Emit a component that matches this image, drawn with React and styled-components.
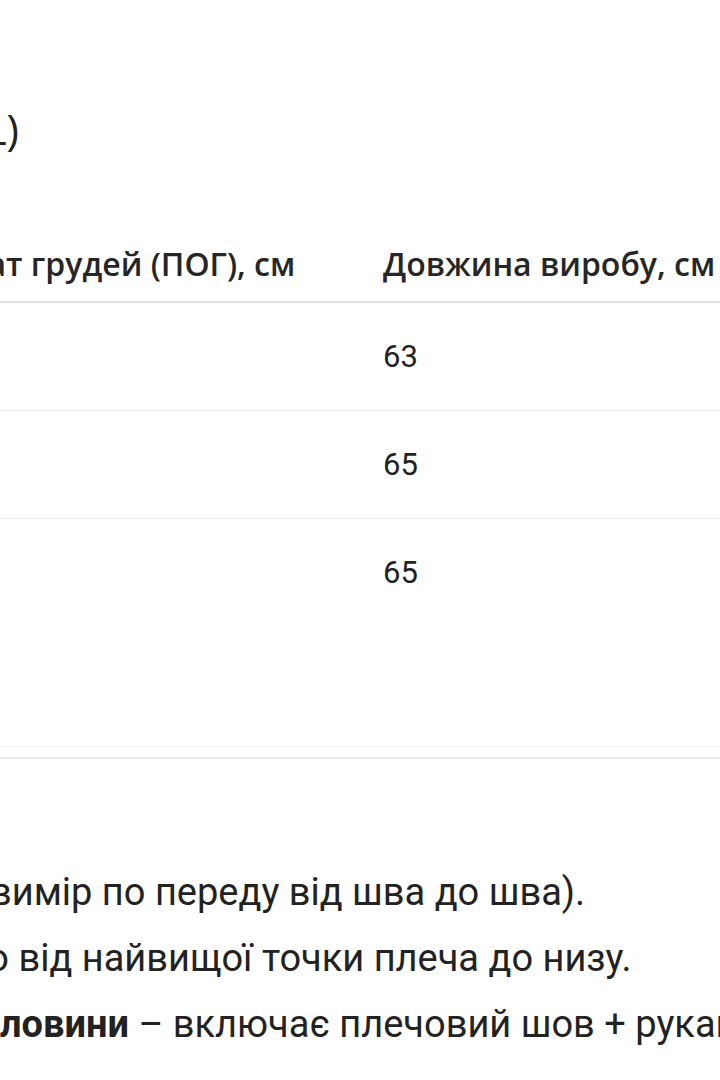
import React from 'react';
import styled, { createGlobalStyle } from 'styled-components';

const Global = createGlobalStyle`
  html, body {
    margin: 0;
    padding: 0;
    background: #fff;
  }
  body {
    font-family: "Open Sans", "Liberation Sans", sans-serif;
    color: #222;
    overflow: hidden;
  }
`;

const rows = [
  { size: 'S', chest: '96', length: '63' },
  { size: 'M', chest: '100', length: '65' },
  { size: 'L–XL', chest: '106', length: '65', tall: true },
];

export default () => {
  return (
    <Page>
      <Global />
      <Title>Таблиця розмірів (S–XL)</Title>

      <Table>
        <HeadCell>Розмір</HeadCell>
        <HeadCell>Обхват грудей (ПОГ), см</HeadCell>
        <HeadCell>Довжина виробу, см</HeadCell>
        {rows.map((r) => (
          <React.Fragment key={r.size}>
            <Cell tall={r.tall}>{r.size}</Cell>
            <Cell tall={r.tall}>{r.chest}</Cell>
            <Cell tall={r.tall}>{r.length}</Cell>
          </React.Fragment>
        ))}
      </Table>

      <Notes>
        <Note>
          <Lead width={290}>ПОГ – обхват грудей (</Lead>
          <span>вимір по переду від шва до шва).</span>
        </Note>
        <Note>
          <Lead width={309}>Довжина виробу – вимір ззаду, тобто</Lead>
          <span>{'\u00a0'}від найвищої точки плеча до низу.</span>
        </Note>
        <Note>
          <Lead width={300}><b>Довжина рукава від гор</b></Lead>
          <span><b>ловини</b> – включає плечовий шов + рукав</span>
        </Note>
      </Notes>
    </Page>
  );
};

const Page = styled.div`
  width: 720px;
  height: 1080px;
  overflow: hidden;
  display: flex;
  flex-direction: column;
`;

// right edge of the title sits near the left border of the crop
const Title = styled.h2`
  margin: 104px 0 0;
  width: 19px;
  display: flex;
  justify-content: flex-end;
  white-space: nowrap;
  font-size: 42px;
  line-height: 50px;
  font-weight: 400;
  color: #222;
`;

const Table = styled.div`
  margin: 74px 0 0 -294px;
  width: 1200px;
  display: grid;
  grid-template-columns: 200px 477px 1fr;
  padding-bottom: 10px;
  border-bottom: 2px solid #ececec;
`;

const HeadCell = styled.div`
  padding: 17px 0 18px;
  font-size: 32px;
  line-height: 38px;
  font-weight: 600;
  color: #262626;
  white-space: nowrap;
  border-bottom: 2px solid #dedede;
`;

const Cell = styled.div`
  padding: 34px 0 33px;
  height: ${(p) => (p.tall ? '160px' : 'auto')};
  font-family: Roboto, "Open Sans", sans-serif;
  font-size: 31px;
  line-height: 40px;
  color: #222;
  border-bottom: 1px solid ${(p) => (p.tall ? '#f4f4f4' : '#ececec')};
`;

const Notes = styled.div`
  margin: 100px 0 0 -300px;
  display: flex;
  flex-direction: column;
  font-family: Roboto, "Open Sans", sans-serif;
  font-size: 38px;
  line-height: 66px;
  color: #222;

  b {
    font-weight: 700;
  }
`;

const Note = styled.div`
  display: flex;
  white-space: nowrap;
`;

const Lead = styled.span`
  flex: 0 0 auto;
  width: ${(p) => p.width}px;
  min-width: 0;
  display: flex;
  justify-content: flex-end;
`;
